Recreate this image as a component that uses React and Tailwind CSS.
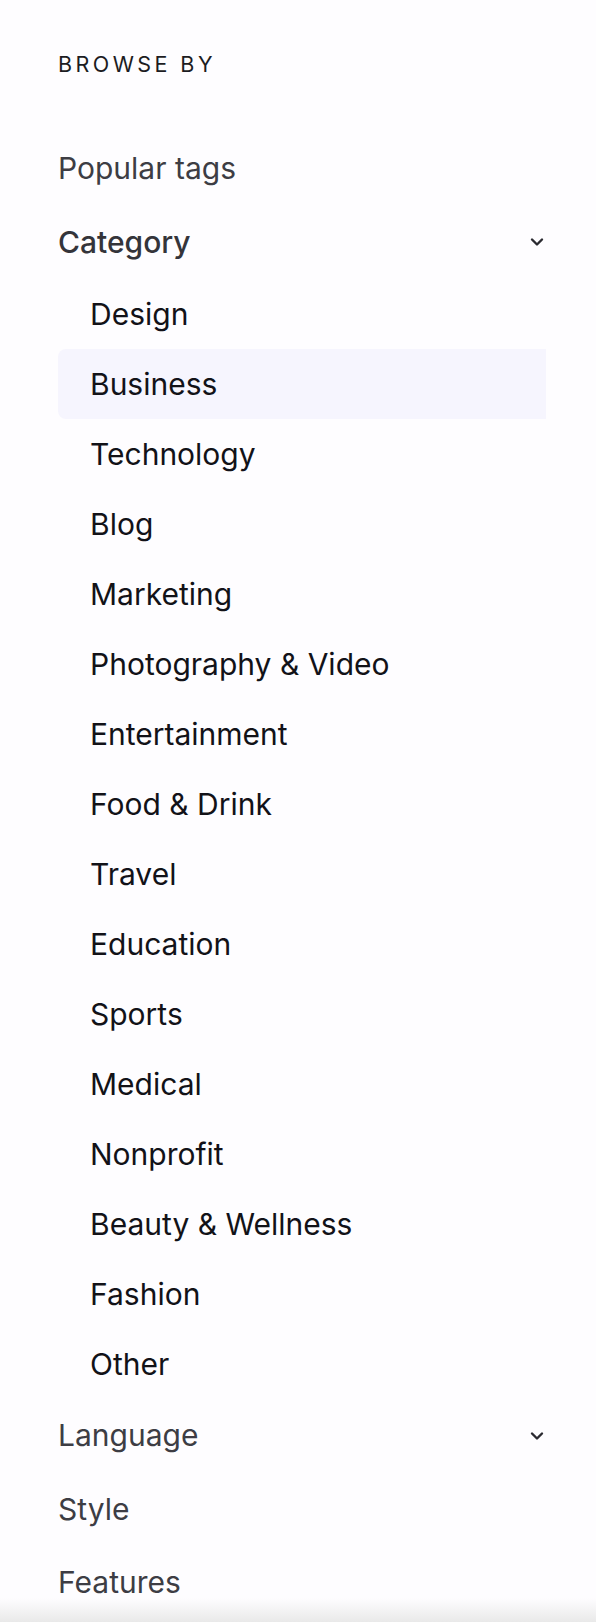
import React from "react";

const categories = [
  "Design",
  "Business",
  "Technology",
  "Blog",
  "Marketing",
  "Photography & Video",
  "Entertainment",
  "Food & Drink",
  "Travel",
  "Education",
  "Sports",
  "Medical",
  "Nonprofit",
  "Beauty & Wellness",
  "Fashion",
  "Other",
];

function Chevron() {
  return (
    <svg width="16" height="16" viewBox="0 0 16 16" fill="none" className="mr-[1px]">
      <polyline
        points="3,5.5 8,10.5 13,5.5"
        stroke="#2a2a30"
        strokeWidth="2.4"
        strokeLinecap="round"
        strokeLinejoin="round"
      />
    </svg>
  );
}

function TopRow({ label, chevron, active }) {
  return (
    <div className="h-[73.5px] flex items-center justify-between">
      <span
        className={
          active
            ? "text-[30px] font-medium text-[#34343a]"
            : "text-[30px] text-[#3d3d44]"
        }
      >
        {label}
      </span>
      {chevron && <Chevron />}
    </div>
  );
}

export default function App() {
  return (
    <div
      className="relative h-[1622px] bg-[#fefdff] overflow-hidden"
      style={{ fontFamily: "Inter, 'Noto Sans', sans-serif" }}
    >
      <div className="ml-[58px] w-[488px] pt-[49px]">
        <div className="h-[30px] flex items-center text-[21.5px] tracking-[0.16em] text-[#1c1c22]">
          BROWSE BY
        </div>
        <div className="h-[53px]" />
        <TopRow label="Popular tags" />
        <TopRow label="Category" chevron active />
        <div className="flex flex-col">
          {categories.map((c) => (
            <div
              key={c}
              className={
                c === "Business"
                  ? "h-[70px] flex items-center pl-[32px] rounded-l-lg bg-[#f6f5fe]"
                  : "h-[70px] flex items-center pl-[32px]"
              }
            >
              <span className="text-[30px] text-[#121218]">{c}</span>
            </div>
          ))}
        </div>
        <TopRow label="Language" chevron />
        <TopRow label="Style" />
        <TopRow label="Features" />
      </div>
      <div className="absolute left-0 right-0 bottom-0 h-[24px] bg-gradient-to-b from-transparent to-[#e9e9e9]" />
    </div>
  );
}
